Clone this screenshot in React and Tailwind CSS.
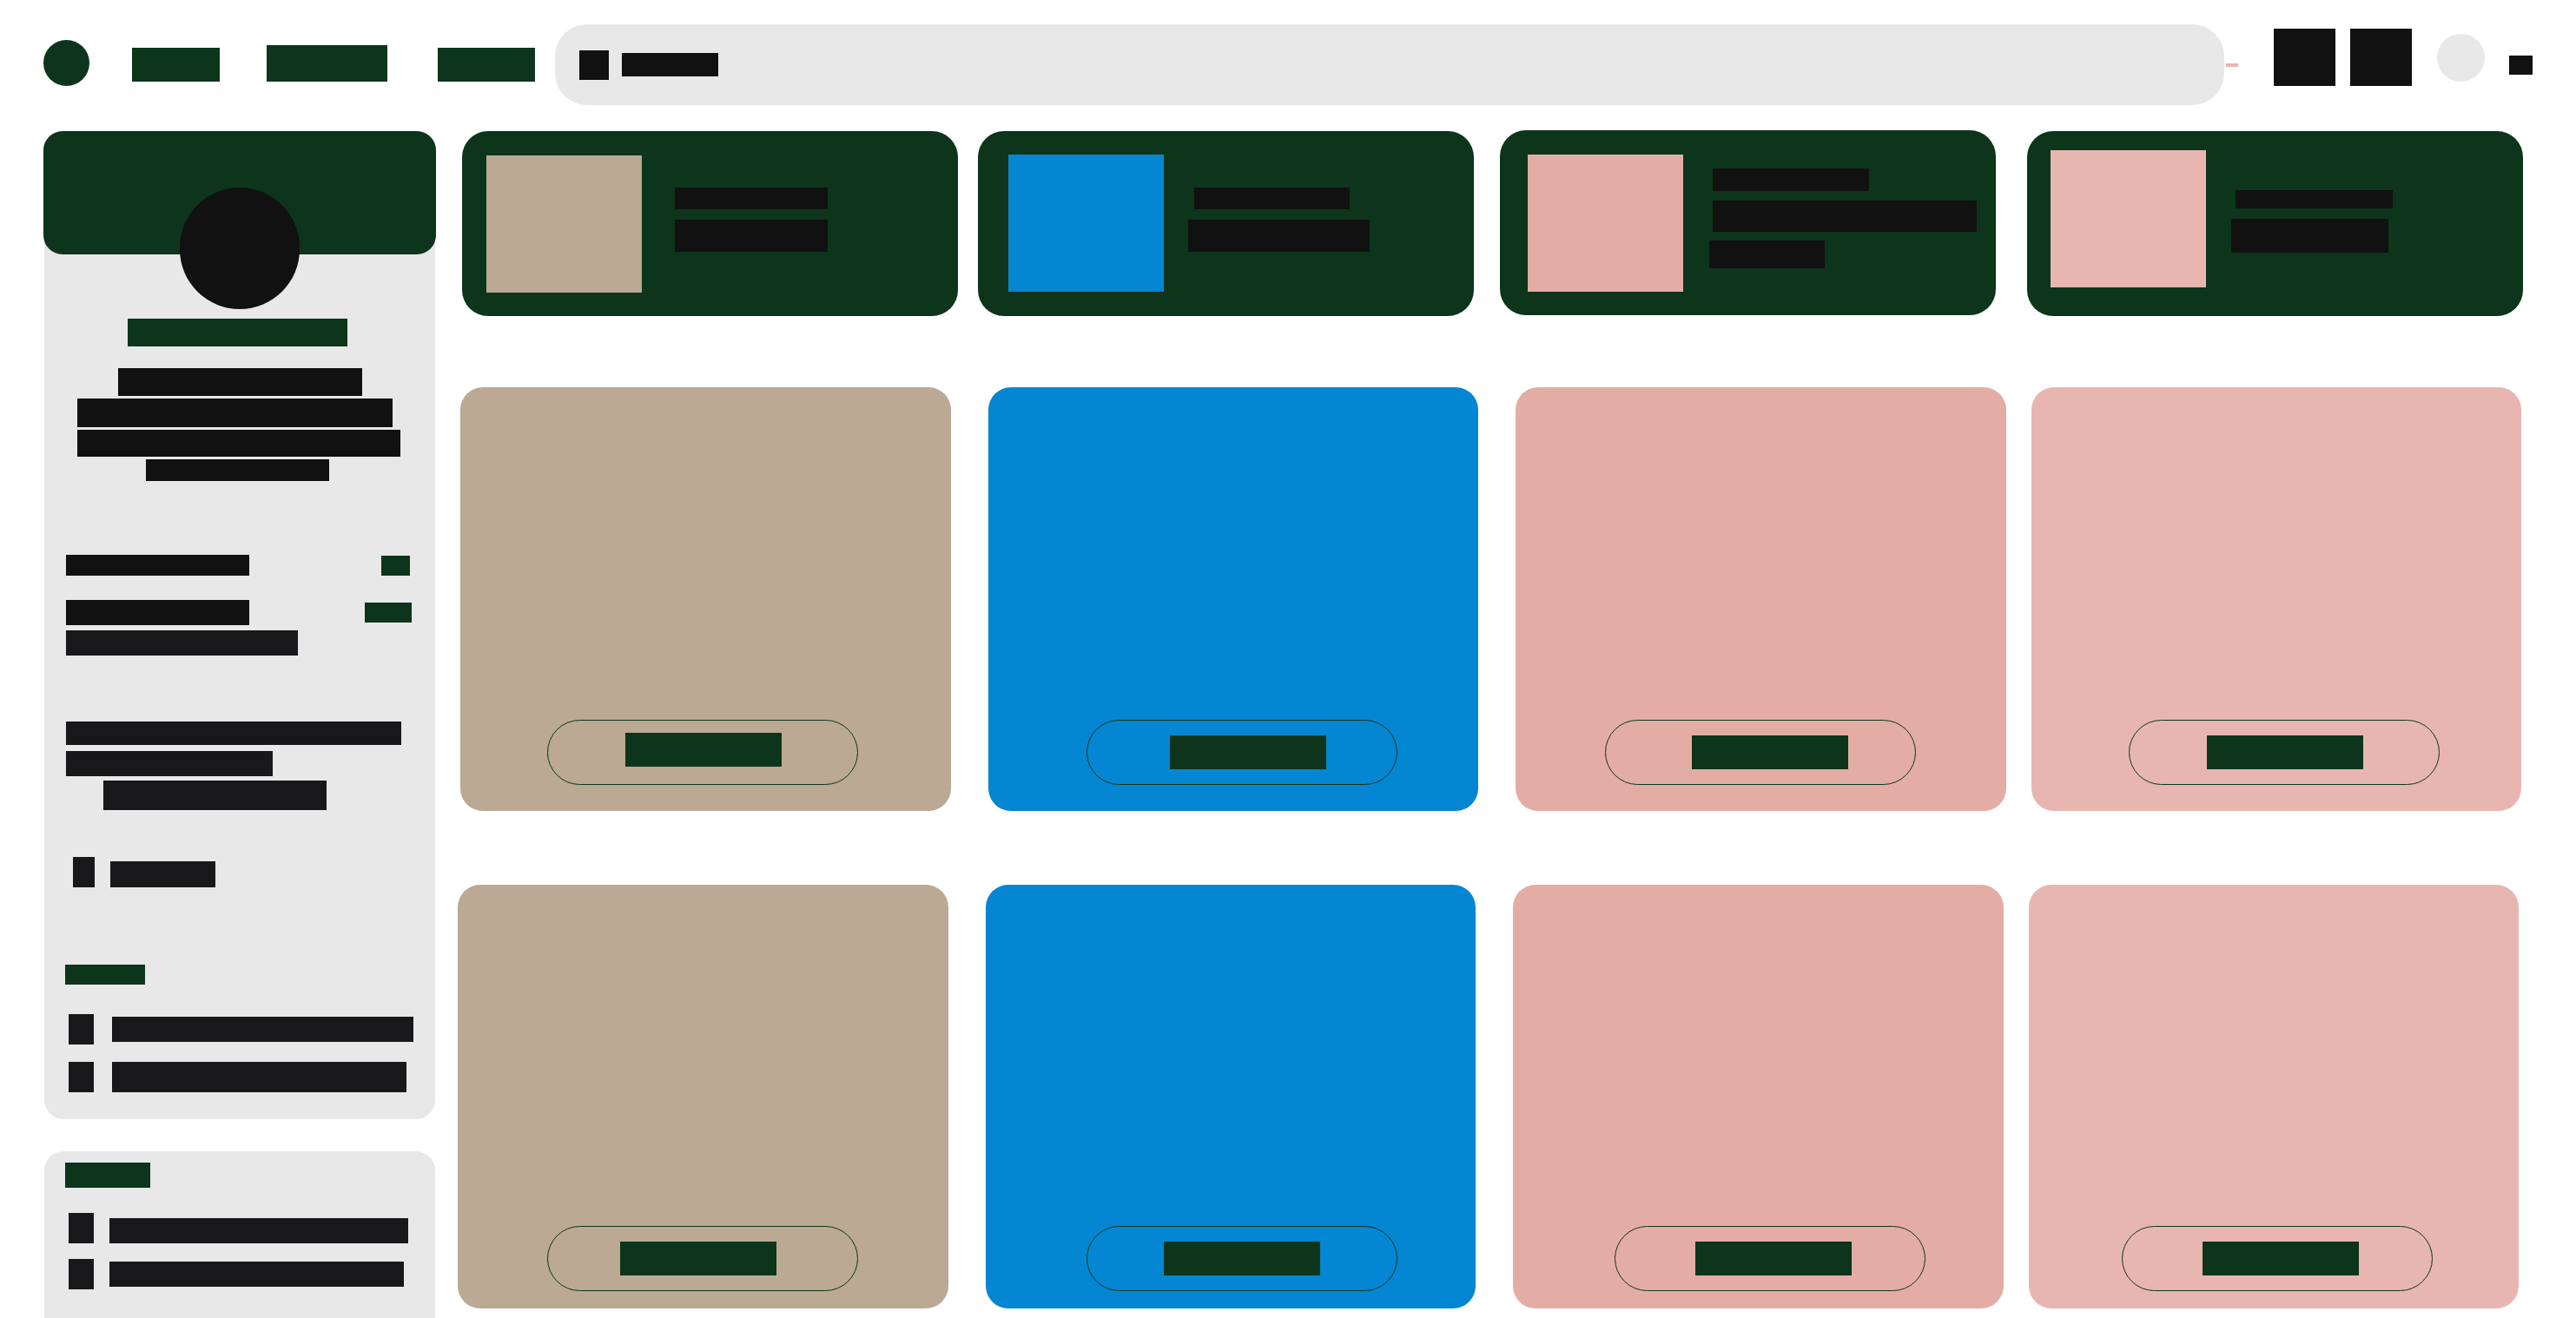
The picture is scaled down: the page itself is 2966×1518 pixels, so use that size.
import React from "react";

function Bar({ className }) {
  return <span aria-hidden="true" className={`block shrink-0 ${className}`} />;
}

function Header() {
  return (
    <header className="flex h-[93px] items-center pl-[50px] pr-[50px]">
      <a href="#home" aria-label="Home" className="mb-1 block size-[53px] shrink-0 rounded-full bg-[#0d351b]" />
      <nav aria-label="Main" className="flex shrink-0 items-center">
        <a href="#first" aria-label="First section" className="ml-[49px] block h-[39px] w-[101px] bg-[#0d351b]" />
        <a href="#second" aria-label="Second section" className="mb-[3px] ml-[54px] block h-[42px] w-[139px] bg-[#0d351b]" />
        <a href="#third" aria-label="Third section" className="ml-[58px] block h-[39px] w-[112px] bg-[#0d351b]" />
      </nav>
      <label className="ml-[23px] flex h-full min-w-0 flex-1 items-center rounded-[37px] bg-[#e8e8e8] pl-7 pr-8">
        <Bar className="h-[34px] w-[34px] bg-[#111111]" />
        <Bar className="ml-[15px] h-[27px] w-[111px] bg-[#111111]" />
        <input type="search" aria-label="Search" className="ml-4 h-full min-w-0 flex-1 appearance-none bg-transparent text-2xl outline-none" />
      </label>
      <Bar className="ml-[2px] h-1 w-[14px] bg-[#e8b6b1]" />
      <button type="button" aria-label="Messages" className="mb-[17px] ml-[41px] h-[66px] w-[71px] shrink-0 bg-[#111111]" />
      <button type="button" aria-label="Notifications" className="mb-[17px] ml-[17px] h-[66px] w-[71px] shrink-0 bg-[#111111]" />
      <button type="button" aria-label="Account" className="mb-[17px] ml-[29px] size-[55px] shrink-0 rounded-full bg-[#e8e8e8]" />
      <button type="button" aria-label="Open account menu" className="ml-7 h-[22px] w-[27px] shrink-0 bg-[#111111]" />
    </header>
  );
}

function ProfileCard() {
  return (
    <section className="mx-px flex h-[1138px] flex-col rounded-[22px] bg-[#e8e8e8]">
      <div className="-mx-px h-[142px] shrink-0 rounded-[22px] bg-[#0d351b]" />
      <div className="-mt-[77px] ml-[156px] h-[140px] w-[138px] shrink-0 rounded-full bg-[#111111]" />

      <Bar className="ml-24 mt-[11px] h-8 w-[253px] bg-[#0d351b]" />
      <Bar className="ml-[85px] mt-[25px] h-8 w-[281px] bg-[#111111]" />
      <Bar className="ml-[38px] mt-[3px] h-[33px] w-[363px] bg-[#111111]" />
      <Bar className="ml-[38px] mt-[3px] h-[31px] w-[372px] bg-[#111111]" />
      <Bar className="ml-[117px] mt-[3px] h-[25px] w-[211px] bg-[#111111]" />

      <div className="mt-[85px] flex justify-between pl-[25px] pr-[29px]">
        <Bar className="h-[24px] w-[211px] bg-[#111111]" />
        <Bar className="mt-px h-[23px] w-[33px] bg-[#0d351b]" />
      </div>
      <div className="mt-7 flex justify-between pl-[25px] pr-[27px]">
        <Bar className="h-[29px] w-[211px] bg-[#111111]" />
        <Bar className="mt-[3px] h-[23px] w-[54px] bg-[#0d351b]" />
      </div>
      <Bar className="ml-[25px] mt-[6px] h-[29px] w-[267px] bg-[#18181a]" />

      <Bar className="ml-[25px] mt-[76px] h-[27px] w-[386px] bg-[#18181a]" />
      <Bar className="ml-[25px] mt-[7px] h-[29px] w-[238px] bg-[#18181a]" />
      <Bar className="ml-[68px] mt-[5px] h-[34px] w-[257px] bg-[#18181a]" />

      <div className="mt-[54px] flex items-end pl-[33px]">
        <Bar className="h-[35px] w-[25px] bg-[#18181a]" />
        <Bar className="ml-[18px] h-[30px] w-[121px] bg-[#18181a]" />
      </div>

      <Bar className="ml-6 mt-[89px] h-[23px] w-[92px] bg-[#0d351b]" />
      <div className="mt-[34px] flex items-center pl-7">
        <Bar className="h-[35px] w-[29px] bg-[#18181a]" />
        <Bar className="ml-[21px] h-[29px] w-[347px] bg-[#18181a]" />
      </div>
      <div className="mt-5 flex items-center pl-7">
        <Bar className="h-[35px] w-[29px] bg-[#18181a]" />
        <Bar className="ml-[21px] h-[35px] w-[339px] bg-[#18181a]" />
      </div>
    </section>
  );
}

function LinksCard() {
  return (
    <section className="mx-px mt-[37px] flex flex-1 flex-col rounded-t-[22px] bg-[#e8e8e8] pt-[13px]">
      <Bar className="ml-6 h-[29px] w-[98px] bg-[#0d351b]" />
      <div className="mt-[29px] flex items-end pl-7">
        <Bar className="h-[35px] w-[29px] bg-[#18181a]" />
        <Bar className="ml-[18px] h-[29px] w-[344px] bg-[#18181a]" />
      </div>
      <div className="mt-[18px] flex items-center pl-7">
        <Bar className="h-[35px] w-[29px] bg-[#18181a]" />
        <Bar className="ml-[18px] h-[29px] w-[339px] bg-[#18181a]" />
      </div>
    </section>
  );
}

const highlights = [
  {
    card: "mt-px",
    inset: "pl-7 pt-7",
    image: "bg-[#bba994]",
    text: "ml-[38px] pt-[37px]",
    lines: ["h-[25px] w-[176px]", "mt-3 h-[37px] w-[176px]"],
  },
  {
    card: "mt-px ml-[23px]",
    inset: "pl-[35px] pt-[27px]",
    image: "bg-[#0486d2]",
    text: "ml-[28px] pt-[38px]",
    lines: ["ml-[7px] h-[25px] w-[179px]", "mt-3 h-[37px] w-[209px]"],
  },
  {
    card: "ml-[30px]",
    inset: "pl-[32px] pt-[28px]",
    image: "bg-[#e3ada5]",
    text: "ml-[30px] pt-4",
    lines: ["ml-1 h-[26px] w-[180px]", "ml-1 mt-[11px] h-[36px] w-[304px]", "mt-[10px] h-8 w-[133px]"],
  },
  {
    card: "mt-px ml-[36px]",
    inset: "pl-[27px] pt-[22px]",
    image: "bg-[#e8b6b1]",
    text: "ml-[29px] pt-[46px]",
    lines: ["ml-[5px] h-[21px] w-[181px]", "mt-3 h-[39px] w-[181px]"],
  },
];

function Highlight({ item }) {
  return (
    <article className={`h-[213px] min-w-0 flex-1 rounded-[30px] bg-[#0d351b] ${item.card}`}>
      <div className={`flex items-start ${item.inset}`}>
        <div className={`h-[158px] w-[179px] shrink-0 ${item.image}`} />
        <div className={item.text}>
          {item.lines.map((line, i) => (
            <Bar key={i} className={`bg-[#111111] ${line}`} />
          ))}
        </div>
      </div>
    </article>
  );
}

const firstRow = [
  { name: "Sand", card: "bg-[#bba994]", inset: "pl-[100px]", button: "pl-[89px] pt-[14px]" },
  { name: "Blue", card: "ml-[43px] bg-[#0486d2]", inset: "pl-[113px]", button: "pl-[95px] pt-[17px]" },
  { name: "Coral", card: "ml-[43px] bg-[#e3ada5]", inset: "pl-[103px]", button: "pl-[99px] pt-[17px]" },
  { name: "Rose", card: "ml-[29px] bg-[#e8b6b1]", inset: "pl-[112px]", button: "pl-[89px] pt-[17px]" },
];

const secondRow = [
  { name: "Sand", card: "bg-[#bba994]", inset: "pl-[103px]", button: "pl-[83px] pt-[17px]" },
  { name: "Blue", card: "ml-[43px] bg-[#0486d2]", inset: "pl-[116px]", button: "pl-[88px] pt-[17px]" },
  { name: "Coral", card: "ml-[43px] bg-[#e3ada5]", inset: "pl-[117px]", button: "pl-[92px] pt-[17px]" },
  { name: "Rose", card: "ml-[29px] bg-[#e8b6b1]", inset: "pl-[107px]", button: "pl-[92px] pt-[17px]" },
];

function CardRow({ items, className, bottom }) {
  return (
    <div className={`flex h-[488px] ${className}`}>
      {items.map((item) => (
        <article key={item.name} className={`flex min-w-0 flex-1 rounded-[26px] ${item.card}`}>
          <div className={`flex flex-1 items-end ${bottom} ${item.inset}`}>
            <button
              type="button"
              aria-label={`Open ${item.name}`}
              className={`flex h-[75px] w-[358px] shrink-0 items-start rounded-full border border-[#0d351b] ${item.button}`}
            >
              <Bar className="h-[39px] w-[180px] bg-[#0d351b]" />
            </button>
          </div>
        </article>
      ))}
    </div>
  );
}

export default function App() {
  return (
    <div className="flex min-h-screen flex-col bg-white pt-7 font-['Inter',sans-serif]">
      <Header />
      <div className="flex flex-1 pl-[50px] pr-[61px] pt-[29px]">
        <aside className="flex w-[452px] shrink-0 flex-col pt-px">
          <ProfileCard />
          <LinksCard />
        </aside>
        <main className="ml-[25px] min-w-0 flex-1">
          <div className="flex items-start pl-[5px]">
            {highlights.map((item, i) => (
              <Highlight key={i} item={item} />
            ))}
          </div>
          <CardRow items={firstRow} className="ml-[3px] mr-[2px] mt-[82px]" bottom="pb-[30px]" />
          <CardRow items={secondRow} className="mr-[5px] mt-[85px]" bottom="pb-5" />
        </main>
      </div>
    </div>
  );
}
